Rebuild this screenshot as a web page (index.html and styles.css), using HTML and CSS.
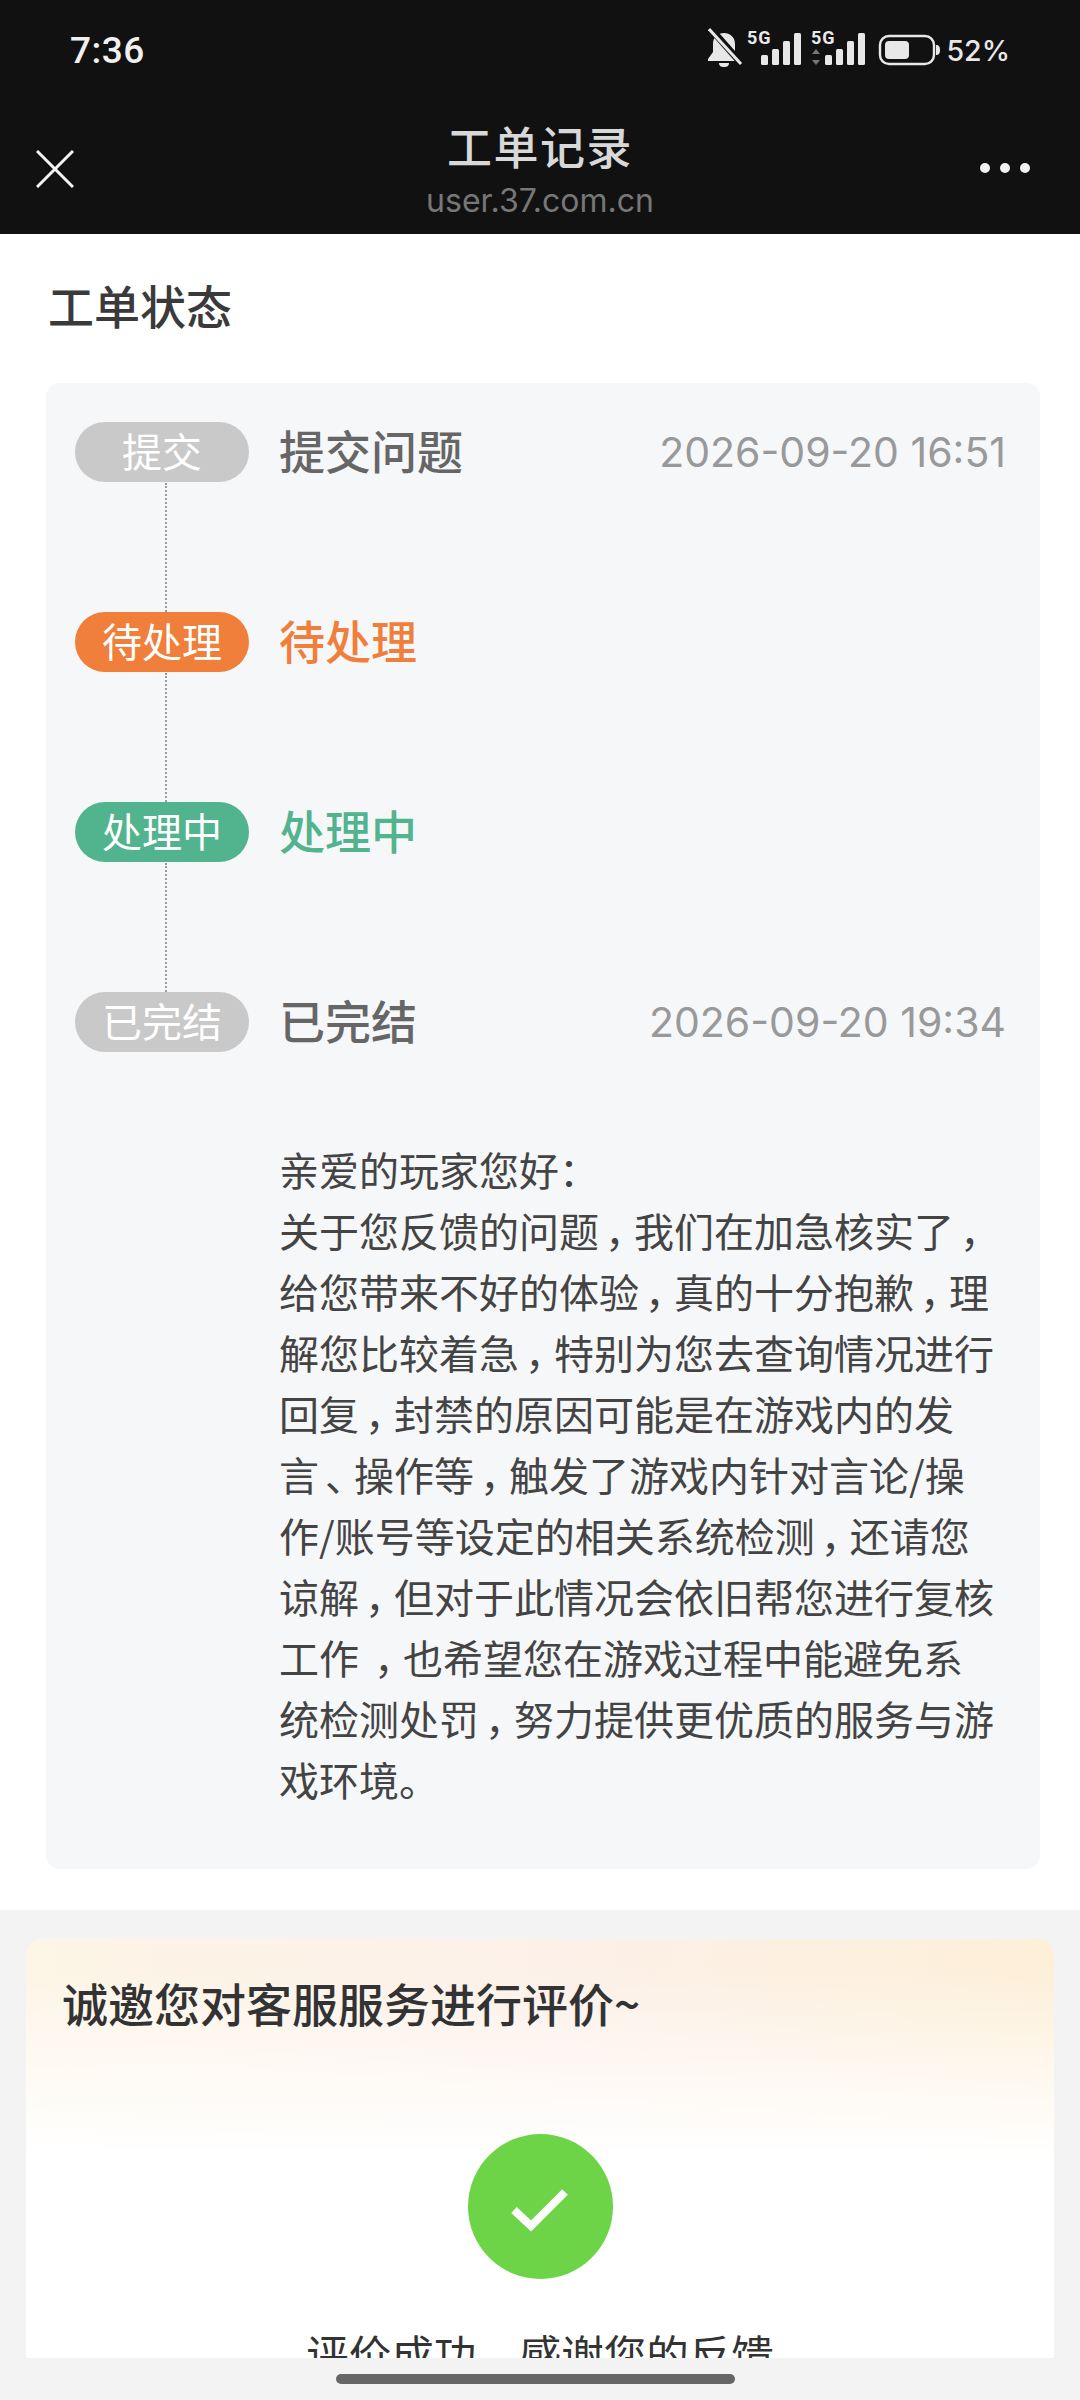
FILE: index.html
```html
<!DOCTYPE html>
<html lang="zh-CN">
<head>
<meta charset="utf-8">
<title>工单记录</title>
<link rel="stylesheet" href="styles.css">
</head>
<body>
<div class="app">
  <header class="topbar">
    <div class="status">
      <span class="clock">7:36</span>
      <div class="status-right">
        <svg class="status-icons" viewBox="0 -6 232 52" width="232" height="52" aria-hidden="true">
          <path d="M16 3c6 0 11 4 11 11v8l5 7v2H0v-2l5-7v-8C5 7 10 3 16 3z" fill="#e8e8e8"/>
          <path d="M11 33h10c0 3-2 4-5 4s-5-1-5-4z" fill="#e8e8e8"/>
          <path d="M3 -1 33 33" stroke="#111" stroke-width="7"/>
          <path d="M1 -1 33 34" stroke="#e8e8e8" stroke-width="3"/>
          <text x="39" y="14" class="net">5G</text>
          <rect x="53" y="25" width="7" height="10" rx="1.5" fill="#e8e8e8"/>
          <rect x="64" y="19" width="7" height="16" rx="1.5" fill="#e8e8e8"/>
          <rect x="75" y="11" width="7" height="24" rx="1.5" fill="#e8e8e8"/>
          <rect x="86" y="3" width="7" height="32" rx="1.5" fill="#e8e8e8"/>
          <text x="103" y="14" class="net">5G</text>
          <path d="M108 19l4 5h-8zM108 35l4-5h-8z" fill="#777"/>
          <rect x="117" y="25" width="7" height="10" rx="1.5" fill="#e8e8e8"/>
          <rect x="128" y="19" width="7" height="16" rx="1.5" fill="#e8e8e8"/>
          <rect x="139" y="11" width="7" height="24" rx="1.5" fill="#e8e8e8"/>
          <rect x="150" y="3" width="7" height="32" rx="1.5" fill="#e8e8e8"/>
          <rect x="172" y="6" width="54" height="28" rx="9" fill="none" stroke="#e8e8e8" stroke-width="2.4"/>
          <rect x="177" y="11" width="24" height="18" rx="4" fill="#e8e8e8"/>
          <path d="M228 15c3 0 4 2 4 5s-1 5-4 5z" fill="#e8e8e8"/>
        </svg>
        <span class="battery">52%</span>
      </div>
    </div>
    <div class="nav">
      <svg class="nav-close" viewBox="0 0 38 38" width="38" height="38" aria-hidden="true">
        <path d="M1 1 37 37M37 1 1 37" stroke="#f2f2f2" stroke-width="3" fill="none"/>
      </svg>
      <div class="nav-title">
        <div class="nav-name">工单记录</div>
        <div class="nav-url">user.37.com.cn</div>
      </div>
      <svg class="nav-more" viewBox="0 0 50 10" width="50" height="10" aria-hidden="true">
        <circle cx="5" cy="5" r="5" fill="#f2f2f2"/>
        <circle cx="25" cy="5" r="5" fill="#f2f2f2"/>
        <circle cx="45" cy="5" r="5" fill="#f2f2f2"/>
      </svg>
    </div>
  </header>

  <section class="ticket">
    <h2 class="ticket-title">工单状态</h2>
    <div class="panel">
      <div class="step step-line">
        <span class="pill pill-gray">提交</span>
        <span class="step-name">提交问题</span>
        <span class="step-date">2026-09-20 16:51</span>
      </div>
      <div class="step step-line">
        <span class="pill pill-orange">待处理</span>
        <span class="step-name name-orange">待处理</span>
      </div>
      <div class="step step-line">
        <span class="pill pill-green">处理中</span>
        <span class="step-name name-green">处理中</span>
      </div>
      <div class="step step-last">
        <span class="pill pill-gray">已完结</span>
        <span class="step-name">已完结</span>
        <span class="step-date">2026-09-20 19:34</span>
      </div>
      <p class="reply">亲爱的玩家您好：<br>关于您反馈的问题<span class="punct">，</span>我们在加急核实了<span class="punct">，</span><br>给您带来不好的体验<span class="punct">，</span>真的十分抱歉<span class="punct">，</span>理<br>解您比较着急<span class="punct">，</span>特别为您去查询情况进行<br>回复<span class="punct">，</span>封禁的原因可能是在游戏内的发<br>言<span class="punct">、</span>操作等<span class="punct">，</span>触发了游戏内针对言论/操<br>作/账号等设定的相关系统检测<span class="punct">，</span>还请您<br>谅解<span class="punct">，</span>但对于此情况会依旧帮您进行复核<br>工作 <span class="punct">，</span>也希望您在游戏过程中能避免系<br>统检测处罚<span class="punct">，</span>努力提供更优质的服务与游<br>戏环境。</p>
    </div>
  </section>

  <main class="rating-wrap">
    <section class="rating">
      <h3 class="rating-title">诚邀您对客服服务进行评价~</h3>
      <svg class="rating-ok" viewBox="0 0 145 145" width="145" height="145" aria-hidden="true">
        <circle cx="72.500" cy="72.500" r="72.500" fill="#6dd447"/>
        <path d="M46 76 63 92 97 58" fill="none" stroke="#fff" stroke-width="8"/>
      </svg>
      <p class="rating-msg">评价成功，感谢您的反馈</p>
    </section>
  </main>

  <footer class="homebar"><span class="home-pill"></span></footer>
</div>
</body>
</html>
```

FILE: styles.css
```css
* { box-sizing: border-box; }
html, body { margin: 0; padding: 0; }
body { width: 1080px; height: 2400px; overflow: hidden; background: #f3f3f3; font-family: "Noto Sans CJK SC", "Noto Sans", sans-serif; }
.app { display: flex; flex-direction: column; height: 2400px; }

.topbar { height: 234px; background: #111112; flex: none; }
.status { height: 100px; display: flex; align-items: center; justify-content: space-between; padding: 0 70px; }
.clock { font-family: Roboto, sans-serif; font-size: 37px; font-weight: 500; color: #f0f0f0; letter-spacing: 0.5px; }
.status-right { display: flex; align-items: center; gap: 7px; }
.status-icons { display: block; }
.net { font-family: Roboto, sans-serif; font-size: 18px; font-weight: 700; letter-spacing: 1px; fill: #e8e8e8; }
.battery { font-family: Inter, sans-serif; font-size: 28.5px; font-weight: 500; color: #e8e8e8; }
.nav { position: relative; height: 134px; display: flex; align-items: center; justify-content: space-between; padding: 0 50px 0 36px; }
.nav-close { margin-top: 4px; }
.nav-more { margin-top: 2px; }
.nav-title { position: absolute; left: 0; right: 0; top: 18px; text-align: center; }
.nav-name { font-size: 45px; line-height: 56px; font-weight: 500; color: #d8d8d8; letter-spacing: 1.5px; }
.nav-url { font-family: Inter, sans-serif; font-size: 32px; line-height: 44px; color: #777; margin-top: 5px; }

.ticket { background: #fff; height: 1676px; flex: none; padding: 43px 40px 0 46px; }
.ticket-title { margin: 0 0 0 2px; font-size: 46px; line-height: 54px; font-weight: 500; color: #3a3a3a; }
.panel { margin-top: 52px; height: 1486px; background: #f6f7f9; border-radius: 14px; padding: 39px 35px 0 29px; }
.step { position: relative; height: 190px; display: flex; align-items: flex-start; }
.step-last { height: 132px; }
.step-line::after { content: ""; position: absolute; left: 90px; top: 61px; height: 129px; border-left: 2px dotted #9a9a9a; }
.pill { flex: none; width: 174px; height: 60px; border-radius: 30px; color: #fff; font-size: 40px; line-height: 56px; text-align: center; }
.pill-gray { background: #c9c9c9; }
.pill-orange { background: #ef7f3a; }
.pill-green { background: #52b48e; }
.step-name { margin-left: 30px; font-size: 46px; line-height: 55px; font-weight: 500; color: #666; }
.name-orange { color: #ef7f3a; }
.name-green { color: #52b48e; }
.step-date { margin-left: auto; margin-right: -1px; font-family: Inter, sans-serif; font-size: 41px; line-height: 60px; color: #999; }
.reply { margin: 15px 0 0 204px; font-size: 40px; line-height: 61px; color: #444; white-space: nowrap; }
.punct { padding-left: 6px; letter-spacing: -11px; }

.rating-wrap { flex: 1; min-height: 0; overflow: hidden; background: #f3f3f3; padding: 29px 26px 0; }
.rating { height: 600px; border-radius: 16px 16px 0 0; padding: 33px 36px 0; background: linear-gradient(180deg, rgba(255,255,255,0) 5%, #fff 36%), linear-gradient(95deg, #fdf5e6 0%, #fcf0e8 50%, #fdefd6 100%); display: flex; flex-direction: column; }
.rating-title { margin: 0; font-size: 46px; line-height: 60px; font-weight: 500; color: #333; }
.rating-ok { display: block; margin: 102px auto 0; flex: none; }
.rating-msg { margin: 44px 0 0; font-size: 42.5px; line-height: 60px; color: #333; text-align: center; }

.homebar { height: 42px; flex: none; background: #f3f3f3; padding: 16px 0 0 336px; }
.home-pill { display: block; width: 399px; height: 10px; border-radius: 5px; background: #666; }
```
